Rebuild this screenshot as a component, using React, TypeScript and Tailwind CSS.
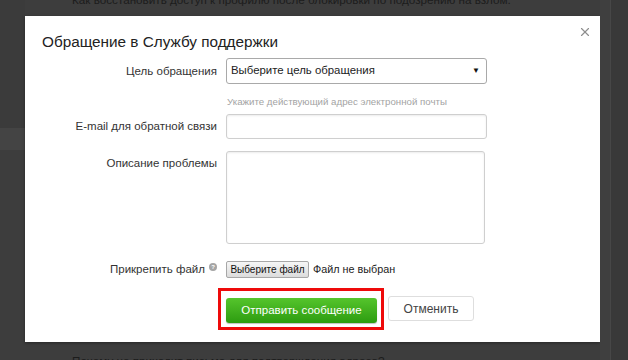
import { X } from "lucide-react";

const labelCls = "text-right pr-[9px] text-[11.5px] text-[#333]";
const fieldCls = "border border-[#cfcfcf] rounded-[3px] bg-white shadow-[inset_0_1px_2px_rgba(0,0,0,0.08)]";

export default function App() {
  return (
    <div className="w-[628px] h-[360px] overflow-hidden flex bg-[#3d3d3d] font-['Liberation_Sans',Arial,sans-serif]">
      {/* left strip */}
      <div className="w-[25px] flex flex-col">
        <div className="h-[128px] bg-[#3b3b3b]" />
        <div className="h-[22px] bg-[#444444]" />
        <div className="flex-1 bg-[#3d3d3d]" />
      </div>

      {/* centre column */}
      <div className="w-[575px] flex flex-col">
        <p className="-mt-[8px] ml-[47px] text-[11.7px] leading-[15px] text-[#1c1c1c] whitespace-nowrap">
          Как восстановить доступ к профилю после блокировки по подозрению на взлом.
        </p>

        {/* modal */}
        <div className="mt-[9px] h-[326px] shrink-0 bg-white shadow-[0_1px_3px_rgba(0,0,0,0.35)] flex flex-col">
          <div className="flex items-start justify-between pt-[9px] pl-[17px] pr-[8px]">
            <h2 className="mt-[7px] text-[15.3px] leading-[20px] text-[#222]">Обращение в Службу поддержки</h2>
            <X size={14} strokeWidth={2} className="text-[#8e8e8e]" />
          </div>

          <div className="mt-[6px] grid grid-cols-[201px_1fr]">
            {/* purpose */}
            <div className={`${labelCls} leading-[26px]`}>Цель обращения</div>
            <div className="w-[261px] h-[26px] border border-[#a9a9a9] rounded-[3px] bg-white flex items-center justify-between pl-[4px] pr-[6px]">
              <span className="text-[11.4px] text-[#222]">Выберите цель обращения</span>
              <span className="text-[8px] text-[#111]">▼</span>
            </div>

            {/* hint */}
            <div />
            <div className="mt-[11px] pl-[1px] text-[9.7px] leading-[14px] text-[#a3a3a3] whitespace-nowrap">
              Укажите действующий адрес электронной почты
            </div>

            {/* email */}
            <div className={`${labelCls} mt-[5px] leading-[25px]`}>E-mail для обратной связи</div>
            <div className={`${fieldCls} mt-[5px] w-[261px] h-[25px]`} />

            {/* description */}
            <div className={`${labelCls} mt-[12px] leading-[24px]`}>Описание проблемы</div>
            <div className={`${fieldCls} mt-[12px] w-[259px] h-[93px]`} />

            {/* file */}
            <div className={`${labelCls} mt-[17px] pr-[7px] flex items-center justify-end gap-[4px] h-[17px]`}>
              <span>Прикрепить файл</span>
              <span className="w-[8px] h-[8px] -mt-[6px] rounded-full bg-[#a5a5a5] text-white text-[6px] leading-[8px] font-bold flex items-center justify-center">?</span>
            </div>
            <div className="mt-[17px] h-[17px] flex items-center gap-[4px]">
              <button className="h-[17px] w-[83px] border border-[#a7a7a7] rounded-[2px] bg-gradient-to-b from-[#f6f6f6] to-[#dcdcdc] text-[10px] leading-[15px] text-[#111] whitespace-nowrap">
                Выберите файл
              </button>
              <span className="text-[10.8px] text-[#222] whitespace-nowrap">Файл не выбран</span>
            </div>

            {/* actions */}
            <div />
            <div className="mt-[10px] -ml-[8px] flex items-start">
              <div className="border-[3px] border-[#ee0a0a] pt-[6px] pb-[4px] pl-[5px] pr-[4px]">
                <button className="w-[151px] h-[25px] rounded-[3px] bg-gradient-to-b from-[#55c52c] to-[#2c9c0f] shadow-[0_1px_1px_rgba(0,0,0,0.25)] text-[11.5px] text-white whitespace-nowrap">
                  Отправить сообщение
                </button>
              </div>
              <button className="ml-[4px] mt-[8px] w-[86px] h-[25px] rounded-[3px] border border-[#dedede] bg-white text-[12px] text-[#444]">
                Отменить
              </button>
            </div>
          </div>
        </div>

        <p className="mt-[11px] ml-[47px] text-[11.7px] leading-[15px] text-[#1c1c1c] whitespace-nowrap">
          Почему не приходит письмо для подтверждения адреса?
        </p>
      </div>

      {/* right strip */}
      <div className="w-[10px] bg-[#3f3f3f]" />
      <div className="flex-1 bg-[#393939] border-l border-[#474747]" />
    </div>
  );
}
